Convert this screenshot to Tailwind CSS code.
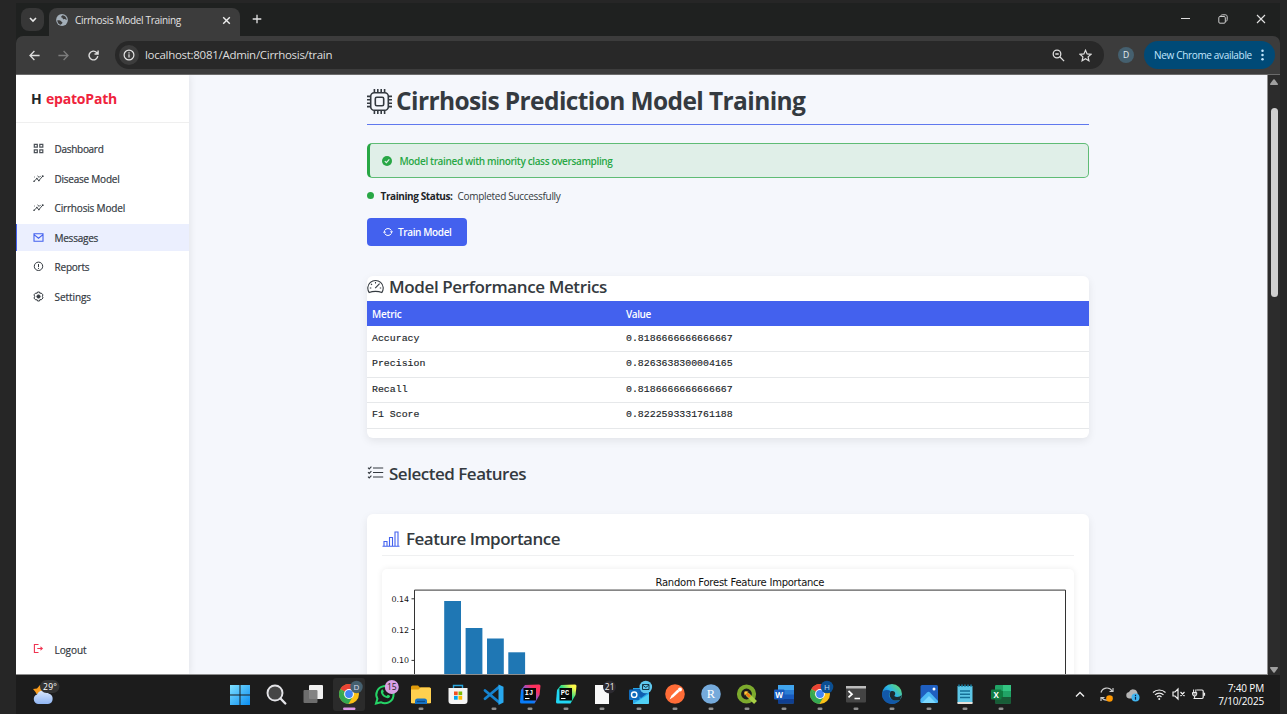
<!DOCTYPE html>
<html lang="en">
<head>
<meta charset="utf-8">
<title>Cirrhosis Model Training</title>
<script src="https://cdn.jsdelivr.net/npm/@tailwindcss/browser@4"></script>
</head>
<body class="w-[1287px] h-[714px] overflow-hidden bg-[#262626] pl-4 pr-[7px] pt-[3px] font-['Open_Sans','Noto_Sans',sans-serif] flex flex-col whitespace-nowrap">
<svg width="0" height="0" class="absolute">
  <defs>
    <linearGradient id="win" x1="0" y1="0" x2="1" y2="1"><stop offset="0" stop-color="#7fe0ff"/><stop offset="1" stop-color="#0a8df0"/></linearGradient>
    <linearGradient id="ij" x1="0" y1="1" x2="1" y2="0"><stop offset=".35" stop-color="#087cfa"/><stop offset=".55" stop-color="#a050c0"/><stop offset=".75" stop-color="#fe315d"/></linearGradient>
    <linearGradient id="pc" x1="0" y1="1" x2="1" y2="0"><stop offset=".35" stop-color="#21d7f5"/><stop offset=".55" stop-color="#21d789"/><stop offset=".85" stop-color="#fcf84a"/></linearGradient>
    <linearGradient id="edge" x1="0" y1="1" x2="1" y2="0"><stop offset=".2" stop-color="#1267b8"/><stop offset=".55" stop-color="#2cb5e8"/><stop offset="1" stop-color="#6ee04f"/></linearGradient>
    <linearGradient id="cloud" x1="0" y1="0" x2="0" y2="1"><stop offset="0" stop-color="#dce8fb"/><stop offset="1" stop-color="#8fb5f3"/></linearGradient>
    <symbol id="trend" viewBox="0 0 16 16"><path d="M1.5 12.2 5.6 8l2.8 3.2L14 4.8M1.8 6.2l1-.9M6.5 4.2 9 6.4l2.2-2.2" fill="none" stroke="currentColor" stroke-width="1.3"/><circle cx="1.6" cy="12" r="1.2"/><circle cx="5.6" cy="8" r="1.1"/><circle cx="8.6" cy="11" r="1.2"/><circle cx="14.2" cy="4.6" r="1.3"/></symbol>
    <symbol id="chrome" viewBox="0 0 20 20"><circle cx="10" cy="10" r="10" fill="#fbc116"/><path d="M10 10 1.34 5A10 10 0 0 1 18.66 5Z" fill="#ea4335"/><path d="M1.34 5A10 10 0 0 0 9.4 20L14 12.2 10 10 5.6 12.3Z" fill="#34a853"/><path d="M1.34 5 5.7 12.5 10 10Z" fill="#34a853"/><path d="M10 5.4h8.9l-.24-.4H10Z" fill="#ea4335"/><circle cx="10" cy="10" r="4.9" fill="#fff"/><circle cx="10" cy="10" r="3.9" fill="#4285f4"/></symbol>
  </defs>
</svg>

<!-- Tab strip -->
<header class="h-[33px] shrink-0 bg-[#1f2120] flex items-end text-[#e3e3e3] pl-[5px]">
  <button class="size-[23px] mb-[5px] rounded-[8px] bg-[#373737] flex items-center justify-center"><svg width="8" height="6" viewBox="0 0 8 6"><path d="m1 1 3 3 3-3" fill="none" stroke="#e8e8e8" stroke-width="1.6"/></svg></button>
  <div class="w-[191px] h-7 ml-[5px] rounded-t-[8px] bg-[#3c3c3c] flex items-center pl-[7px] pb-[4px]">
    <svg width="12" height="12" viewBox="0 0 12 12"><circle cx="6" cy="6" r="5.900" fill="#a4afb9"/><path d="M1.300 6.300c1.700-.2 3.200 0 3.800.9s1.500.6 1.300 1.700-1.400.6-1.500 1.900C2.500 10.300 1.300 8.500 1.300 6.300ZM6.500 1.200c-.8.900-1.500 1-1.300 1.900s1.300.4 1.500 1.300 1 .9 1.900.7 1 .8 2.100.8C10.600 3.500 9 1.400 6.500 1.200Z" fill="#3c3c3c"/></svg>
    <span class="ml-[7px] text-[10px] tracking-[-0.317px]">Cirrhosis Model Training</span>
    <svg class="ml-auto mr-[9px]" width="9" height="9" viewBox="0 0 9 9"><path d="m1.200 1.200 6.600 6.600m0-6.600L1.200 7.800" stroke="#eee" stroke-width="1.400"/></svg>
  </div>
  <svg class="ml-[12px] mb-[12px]" width="10" height="10" viewBox="0 0 10 10"><path d="M5 .7v8.600M.7 5h8.600" stroke="#e3e3e3" stroke-width="1.300"/></svg>
  <div class="ml-auto flex items-center mb-[12px] pr-[14px]">
    <svg width="9" height="9" viewBox="0 0 9 9"><path d="M0 3.500h9" stroke="#ddd"/></svg>
    <svg class="ml-[28px]" width="10" height="10" viewBox="0 0 10 10" fill="none" stroke="#ccc"><rect x=".8" y="2.500" width="6.500" height="6.700" rx="1.200"/><path d="M2.800 2.300C2.800 1.200 3.500.8 4.300.8h3C8.500.8 9.200 1.500 9.200 2.700v3c0 1-.5 1.500-1.700 1.600"/></svg>
    <svg class="ml-[28px]" width="10" height="10" viewBox="0 0 10 10"><path d="m1 1 8 8m0-8L1 9" stroke="#e3e3e3" stroke-width="1.100"/></svg>
  </div>
</header>

<!-- Toolbar -->
<div class="h-[38px] shrink-0 bg-[#1f2120]">
<div class="h-full bg-[#3c3c3c] rounded-t-[7px] flex items-center pl-[13px] pr-[5px]">
  <svg width="11" height="11" viewBox="0 0 11 11" fill="none" stroke="#dedede" stroke-width="1.300"><path d="M10.600 5.500H1.200M5.400 1 1 5.500 5.400 10"/></svg>
  <svg class="ml-[18px]" width="11" height="11" viewBox="0 0 11 11" fill="none" stroke="#7c7c7c" stroke-width="1.300"><path d="M.4 5.500h9.400M5.600 1 10 5.500 5.600 10"/></svg>
  <svg class="ml-[19px]" width="11" height="11" viewBox="0 0 11 11" fill="none" stroke="#dedede" stroke-width="1.400"><path d="M9.800 6.200A4.400 4.400 0 1 1 8.600 2.400L9.900 3.700M10.100.4v3.600H6.500"/></svg>
  <div class="ml-4 w-[989px] h-7 rounded-full bg-[#282828] flex items-center pl-[4px] pr-[12px] text-[#dedede]">
    <span class="size-5 rounded-full bg-[#3c3c3c] flex items-center justify-center"><svg width="12" height="12" viewBox="0 0 12 12" fill="none" stroke="#e3e3e3" stroke-width="1.200"><circle cx="6" cy="6" r="4.900"/><path d="M6 5.300v3.200M6 3.200v1.200"/></svg></span>
    <span class="ml-[6px] text-[11.500px] tracking-[-0.287px]">localhost:8081/Admin/Cirrhosis/train</span>
    <svg class="ml-auto" width="13" height="13" viewBox="0 0 13 13" fill="none" stroke="#dedede" stroke-width="1.300"><circle cx="5" cy="5" r="3.800"/><path d="m7.800 7.800 4.300 4.300M3.300 5h3.400"/></svg>
    <svg class="ml-[14px]" width="13" height="13" viewBox="0 0 13 13" fill="none" stroke="#dedede" stroke-width="1.200"><path d="m6.500 1.300 1.600 3.600 3.900.4-2.900 2.600.8 3.900-3.400-2-3.400 2 .8-3.900L1 5.300l3.900-.4Z"/></svg>
  </div>
  <span class="ml-[14px] size-4 rounded-full bg-[#45606f] text-[#e6eef2] text-[8.500px] flex items-center justify-center">D</span>
  <div class="ml-auto w-[131px] h-7 rounded-full bg-[#004a77] text-[#c2e7ff] text-[10px] flex items-center pl-[10px] pr-[11px]"><span class="tracking-[-0.33px] pt-[1px]">New Chrome available</span>
    <svg class="ml-auto" width="3" height="12" viewBox="0 0 3 12" fill="#c2e7ff"><circle cx="1.500" cy="1.700" r="1.250"/><circle cx="1.500" cy="6" r="1.250"/><circle cx="1.500" cy="10.300" r="1.250"/></svg>
  </div>
</div>
</div>

<!-- Page -->
<div class="h-[601px] shrink-0 flex border-t border-[#6b6b6b] bg-[#2c2c2c]">
  <div class="w-[1252px] h-[600px] bg-[#f5f7fc] flex border-b border-b-[#8e8e8e] border-r border-r-[#8e8e8e] overflow-hidden">
    <aside class="w-[172.500px] bg-white shadow-[0_0_8px_rgba(0,0,0,0.1)] flex flex-col text-[#33393f] z-10">
      <div class="h-12 border-b border-[#efefef] flex items-center pl-[15px] text-[14px] font-bold text-[#212529]"><span class="w-[15px]">H</span><span class="text-[#ef233c] tracking-[-0.207px]">epatoPath</span></div>
      <nav class="pt-[12.500px] flex flex-col gap-[2.600px] text-[10px] font-medium [&_svg]:-mt-[1px] [&_span]:pt-[1px] [&_span]:[-webkit-text-stroke:0.2px]">
        <a class="h-[27px] pl-[17px] flex items-center gap-[10.500px]"><svg width="11" height="11" viewBox="0 0 11 11" fill="none" stroke="#4c5258" stroke-width="1.200"><path d="M1.300 1.300h3v2.800h-3zM6.800 1.300h3v2.800h-3zM1.300 6.800h3v2.900h-3zM6.800 6.800h3v2.900h-3z"/></svg><span class="tracking-[-0.29px]">Dashboard</span></a>
        <a class="h-[27px] pl-[17px] flex items-center gap-[10.500px]"><svg width="11" height="11" fill="#33393f" color="#33393f"><use href="#trend"/></svg><span class="tracking-[-0.23px]">Disease Model</span></a>
        <a class="h-[27px] pl-[17px] flex items-center gap-[10.500px]"><svg width="11" height="11" fill="#33393f" color="#33393f"><use href="#trend"/></svg><span class="tracking-[-0.17px]">Cirrhosis Model</span></a>
        <a class="h-[27px] pl-4 flex items-center gap-[10.500px] bg-[#ebeffe] border-l border-[#4361ee]"><svg width="11" height="11" viewBox="0 0 11 11" fill="none" stroke="#4361ee" stroke-width="1.100"><path d="M1 1.800h9v7.400H1zM1 2.600l4.500 3.600L10 2.600"/></svg><span class="tracking-[-0.25px]">Messages</span></a>
        <a class="h-[27px] pl-[17px] flex items-center gap-[10.500px]"><svg width="11" height="11" viewBox="0 0 11 11" fill="none" stroke="#33393f"><circle cx="5.500" cy="5.300" r="4.200"/><path d="M5.500 3v3M5.500 6.900v1"/></svg><span class="tracking-[-0.2px]">Reports</span></a>
        <a class="h-[27px] pl-[17px] flex items-center gap-[10.500px]"><svg width="11" height="11" viewBox="0 0 11 11" fill="none" stroke="#33393f"><path d="M4.500 1h2l.4 1.300 1.300-.3 1.700 1.800L9.400 5.500l.6 1.400-1.600 1.800-1.500-.1L6.500 10h-2l-.4-1.300-1.400.2L1 7.100l.7-1.600L1 3.800 2.700 2l1.400.3Z"/><circle cx="5.500" cy="5.500" r="1.600" fill="#33393f"/></svg><span class="tracking-[-0.07px]">Settings</span></a>
      </nav>
      <a class="mt-auto mb-[10.500px] h-[27px] pl-[17px] flex items-center gap-[10.500px] text-[10px] font-medium"><svg class="mb-[3px]" width="11" height="11" viewBox="0 0 11 11" fill="none" stroke="#ef3350" stroke-width="1.100"><path d="M5.500 1.500H1.400v8h4.100M4.300 5.500h4.500"/><path d="m7.500 3.300 2.600 2.200-2.600 2.200Z" fill="#ef3350" stroke="none"/></svg><span class="pt-[1px] tracking-[-0.06px] [-webkit-text-stroke:0.2px]">Logout</span></a>
    </aside>

    <main class="ml-[178.500px] w-[722px] flex flex-col shrink-0 text-[#343a40] *:shrink-0">
      <h1 class="h-[50px] border-b border-[#5f78ee] flex items-center gap-[4px] text-[24.500px] font-bold pt-[4px]">
        <svg width="25" height="25" viewBox="0 0 25 25" fill="none" stroke="#343a40" stroke-width="1.600"><rect x="3.700" y="3.700" width="17.600" height="17.600" rx="3.600"/><rect x="8.300" y="8.300" width="8.400" height="8.400" rx="1.500"/><path d="M7.400 0v3.700m3.400-3.700v3.700m3.400-3.700v3.700m3.400-3.700v3.700M7.400 21.300V25m3.400-3.700V25m3.400-3.700V25m3.400-3.700V25M0 7.400h3.700M0 10.800h3.700M0 14.200h3.700M0 17.600h3.700M21.300 7.400H25m-3.700 3.400H25m-3.700 3.400H25m-3.700 3.400H25"/></svg>
        <span class="tracking-[-0.6px]">Cirrhosis Prediction Model Training</span>
      </h1>
      <div class="mt-[18px] h-[35px] rounded-[5px] border border-l-[3px] border-[#28a745]/70 border-l-[#28a745] bg-[#e0efe8] flex items-center pl-3 gap-[7.500px] text-[10px] font-semibold text-[#28a745]">
        <svg width="10" height="10" viewBox="0 0 10 10"><circle cx="5" cy="5" r="5" fill="#28a745"/><path d="m2.800 5.100 1.600 1.600 2.900-3.300" fill="none" stroke="#e0efe8" stroke-width="1.200"/></svg>
        <span class="pt-[2px] tracking-[-0.357px]">Model trained with minority class oversampling</span>
      </div>
      <div class="mt-[9px] h-[17px] flex items-center text-[10px]"><span class="size-[7px] rounded-full bg-[#28a745] mr-[6.500px]"></span><b class="pt-[1px] text-[#212529] tracking-[-0.405px]">Training Status:</b><span class="pt-[1px] ml-[5px] tracking-[-0.3px]">Completed Successfully</span></div>
      <button class="mt-[13.500px] w-[100px] h-[28.500px] rounded-[4px] bg-[#4361ee] text-white text-[10px] font-semibold flex items-center pl-4 gap-[5px]"><svg width="10" height="10" viewBox="0 0 10 10" fill="none" stroke="#fff" stroke-width="1"><path d="M1.600 3.600A3.800 3.800 0 0 1 8.400 3.600M8.400 6.400A3.800 3.800 0 0 1 1.600 6.400"/><path d="M8.500 6.500 7 4.300h3ZM1.500 3.500l1.500 2.200H0Z" fill="#fff" stroke="none"/></svg><span class="pt-[1px] tracking-[-0.375px]">Train Model</span></button>

      <section class="mt-[29.500px] h-[162.500px] rounded-[6px] bg-white shadow-[0_3px_8px_rgba(0,0,0,0.08)] overflow-hidden">
        <h2 class="h-[25.500px] flex items-center gap-[5px] text-[17px] font-semibold pb-[3px]">
          <svg class="-mt-px" width="17" height="15" viewBox="0 0 17 15" fill="none" stroke="#343a40" stroke-width="1.100"><path d="M2.200 13.600a7.700 7.700 0 1 1 12.600 0c-2-.9-4-1.200-6.300-1.200s-4.300.3-6.300 1.200Z"/><path d="M8.500 3v1.500M4 4.800l1 1M2.800 9h1.500M12.800 9h1.400M8.200 9.200 12.600 4.600"/></svg>
          <span class="tracking-[-0.382px]">Model Performance Metrics</span></h2>
        <table class="w-full text-left border-collapse">
          <thead><tr class="h-[25px] bg-[#4361ee] text-white text-[10px]"><th class="pl-[5px] pt-[2px] w-[254px] font-semibold tracking-[-0.26px]">Metric</th><th class="pl-[5px] pt-[2px] font-semibold tracking-[-0.4px]">Value</th></tr></thead>
          <tbody class="font-['Liberation_Mono',monospace] text-[9.900px] text-[#212529] [-webkit-text-stroke:0.15px] [&_td]:pt-[1px]">
            <tr class="h-[25.500px] border-b border-[#e6e8ea]"><td class="pl-[5px]">Accuracy</td><td class="pl-[5px]">0.8186666666666667</td></tr>
            <tr class="h-[25.500px] border-b border-[#e6e8ea]"><td class="pl-[5px]">Precision</td><td class="pl-[5px]">0.8263638300004165</td></tr>
            <tr class="h-[25.500px] border-b border-[#e6e8ea]"><td class="pl-[5px]">Recall</td><td class="pl-[5px]">0.8186666666666667</td></tr>
            <tr class="h-[25.500px] border-b border-[#e6e8ea]"><td class="pl-[5px]">F1 Score</td><td class="pl-[5px]">0.8222593331761188</td></tr>
          </tbody>
        </table>
      </section>

      <h2 class="mt-[23px] h-[25px] flex items-center gap-[5px] text-[17px] font-semibold">
        <svg class="mb-[2px]" width="17" height="13" viewBox="0 0 17 13" fill="none" stroke="#343a40" stroke-width="1.100"><path d="M6 2h10.200M6 6.500h10.200M6 11h10.200M1 1.700l1.200 1.200L4.400.6M1 6.200l1.200 1.200 2.200-2.300M1 10.700l1.200 1.200 2.200-2.300"/></svg>
        <span class="tracking-[-0.487px]">Selected Features</span></h2>

      <section class="mt-[28px] h-[200px] rounded-t-[6px] bg-white shadow-[0_3px_8px_rgba(0,0,0,0.08)] px-[15px] pt-[13px]">
        <h2 class="h-[29px] border-b border-[#eff0f1] flex items-center gap-[6px] text-[17px] font-semibold pb-[4px]">
          <svg width="18" height="16" viewBox="0 0 18 16" fill="none" stroke="#4361ee" stroke-width="1.100"><path d="M.5 15.200h17M2 15v-4.500h3V15M7.500 15V6.500h3V15M13 15V1h3v14"/></svg>
          <span class="tracking-[-0.507px]">Feature Importance</span></h2>
        <div class="mt-[13px] h-[150px] rounded-[5px] bg-white shadow-[0_0_6px_rgba(0,0,0,0.08)]">
          <svg width="692" height="150" viewBox="0 0 692 150" class="font-['DejaVu_Sans',sans-serif]">
            <text x="358" y="16.500" font-size="10" text-anchor="middle" textLength="169" fill="#111">Random Forest Feature Importance</text>
            <g fill="#1f77b4"><rect x="62.200" y="32" width="16.800" height="118"/><rect x="83.600" y="59" width="16.800" height="91"/><rect x="105" y="69.500" width="16.800" height="80"/><rect x="126.300" y="83.300" width="16.800" height="70"/></g>
            <path d="M32.500 150V21.100h651V150M29.500 29.800h3M29.500 60.500h3M29.500 91.400h3" fill="none" stroke="#333" stroke-width="1"/>
            <g font-size="7.900" fill="#111"><text x="9.500" y="32.700">0.14</text><text x="9.500" y="63.600">0.12</text><text x="9.500" y="94.300">0.10</text></g>
          </svg>
        </div>
      </section>
    </main>
  </div>
  <div class="w-3 flex flex-col items-center pt-[4px] pb-[2px]">
    <svg width="8" height="6" viewBox="0 0 8 6"><path d="M3.300.6a.9.9 0 0 1 1.400 0L8 5q.2 1-.7 1H.7Q-.2 6 0 5Z" fill="#a0a0a0"/></svg>
    <div class="mt-[23px] w-[7px] h-[189px] rounded-full bg-[#d0d0d0]"></div>
    <svg class="mt-auto" width="8" height="6" viewBox="0 0 8 6"><path d="M3.300 5.400a.9.9 0 0 0 1.400 0L8 1Q8.200 0 7.300 0H.7Q-.2 0 0 1Z" fill="#a0a0a0"/></svg>
  </div>
</div>

<!-- Taskbar -->
<footer class="h-[39px] shrink-0 bg-[#1c1c1c] flex text-white">
  <div class="w-[206px] pl-4 pt-[4px]"><svg width="28" height="27" viewBox="0 0 28 27"><path d="m1 10 4-.5L8 6l2.500 3 1 5-7 1-1-2Z" fill="#f89b1c"/><path d="M6 25a5 5 0 0 1-1-9.600 6.500 6.500 0 0 1 11.500-1 5.400 5.400 0 0 1-.5 10.600Z" fill="url(#cloud)"/><rect x="8" y="1" width="19.500" height="13" rx="6.500" fill="#333"/><text x="11" y="10.500" font-size="8.500" textLength="14" fill="#fff">29°</text></svg></div>
  <div class="w-[797px] flex [&>div]:flex-1 [&>div]:flex [&>div]:justify-center [&>div]:pt-[3px]">
    <div><svg width="32" height="34" viewBox="0 0 32 34"><path d="M6 7h9.500v9.500H6zM16.500 7H26v9.500h-9.500zM6 17.500h9.500V27H6zM16.500 17.500H26V27h-9.500z" fill="url(#win)"/></svg></div>
    <div><svg width="32" height="34" viewBox="0 0 32 34"><circle cx="15" cy="15" r="7.500" fill="#464646" stroke="#e4e4e8" stroke-width="1.900"/><path d="m20.500 20.500 4.800 5" stroke="#e4e4e8" stroke-width="2.400" stroke-linecap="round"/></svg></div>
    <div><svg width="32" height="34" viewBox="0 0 32 34"><rect x="12" y="7" width="14" height="14" rx="1" fill="#f0f0f0"/><rect x="6.500" y="12" width="14" height="13" rx="1" fill="#777" fill-opacity=".9"/></svg></div>
    <div><svg width="32" height="34" viewBox="0 0 32 34"><rect x="0" y="0" width="32" height="33" rx="3" fill="#2b2b2b"/><use href="#chrome" x="6" y="6" width="20" height="20"/><circle cx="23.500" cy="9" r="6.200" fill="#45606f"/><text x="23.500" y="12" font-size="8" fill="#dde" text-anchor="middle">D</text><rect x="10" y="29.500" width="12.500" height="2.500" rx="1.200" fill="#dc9ae6"/></svg></div>
    <div><svg width="32" height="34" viewBox="0 0 32 34"><path d="M7 25.500 8.400 20.800A8.600 8.600 0 1 1 11.800 24.200Z" fill="#1c1c1c" stroke="#25d366" stroke-width="2"/><path d="M12.500 12c1-1 1.500-.5 2.200 1.500.2.700-.8 1-.6 1.500.8 1.500 2 2.500 3.300 3 .7.200 1-1.200 1.500-1.200 2 .7 2.500 1.200 1.900 2.300-1 1.700-3.300 1.400-5.500 0-2.300-1.500-4.600-4.800-2.800-7.100Z" fill="#25d366"/><circle cx="22.800" cy="9" r="7" fill="#d9a0e5"/><text x="22.800" y="12" font-size="8.500" fill="#222" text-anchor="middle">15</text></svg></div>
    <div><svg width="32" height="34" viewBox="0 0 32 34"><path d="M6 9q0-1.500 1.500-1.500H13l2 2h9.500q1.500 0 1.500 1.500v13q0 1.500-1.500 1.500h-17Q6 25.500 6 24Z" fill="#e09b0b"/><path d="M6 11.500h7.500l2-2h9q1.500 0 1.500 1.500v14H6Z" fill="#ffd04f"/><path d="M10 26v-3q0-2.500 2.500-2.500h7Q22 20.500 22 23v3Z" fill="#1672c4"/><path d="M12 23.500h8" stroke="#0b4b86" stroke-width="1.200"/><rect x="13.500" y="29.500" width="5" height="2.500" rx="1.200" fill="#8f8f8f"/></svg></div>
    <div><svg width="32" height="34" viewBox="0 0 32 34"><path d="M11.500 11V7.500h9V11" fill="none" stroke="#29a6df" stroke-width="1.400"/><path d="M6.500 10h19v13q0 3-3 3h-13q-3 0-3-3Z" fill="#f4f4f4"/><path d="M12 13.500h3.700v3.700H12z" fill="#f25022"/><path d="M16.500 13.500h3.700v3.700h-3.700z" fill="#7fba00"/><path d="M12 18h3.700v3.700H12z" fill="#00a4ef"/><path d="M16.500 18h3.700v3.700h-3.700z" fill="#ffb900"/></svg></div>
    <div><svg width="32" height="34" viewBox="0 0 32 34"><path d="m7 12.500 14 11.800M7 20.700 21 9" stroke="#1583cf" stroke-width="2.800" stroke-linecap="round"/><path d="m20.500 6.500 5 2.300v15.800l-5 2.400Z" fill="#28a8ee"/><rect x="13.500" y="29.500" width="5" height="2.500" rx="1.200" fill="#8f8f8f"/></svg></div>
    <div><svg width="32" height="34" viewBox="0 0 32 34"><path d="m11 7 14-.5q1.500 0 1.500 1.500l-1 9-5 8.500H7.500Q6 25.500 6 24l1-12Z" fill="url(#ij)"/><rect x="9.500" y="10" width="12.500" height="12.500" fill="#080808"/><text x="10.800" y="16.500" font-size="7" font-weight="700" font-family="Liberation Mono" fill="#fff">IJ</text><path d="M11 20.500h4.500" stroke="#fff"/><rect x="13.500" y="29.500" width="5" height="2.500" rx="1.200" fill="#8f8f8f"/></svg></div>
    <div><svg width="32" height="34" viewBox="0 0 32 34"><path d="m11 7 14-.5q1.500 0 1.500 1.500l-1 9-5 8.500H7.500Q6 25.500 6 24l1-12Z" fill="url(#pc)"/><rect x="9.500" y="10" width="12.500" height="12.500" fill="#080808"/><text x="10.800" y="16.500" font-size="7" font-weight="700" font-family="Liberation Mono" fill="#fff">PC</text><path d="M11 20.500h4.500" stroke="#fff"/><rect x="13.500" y="29.500" width="5" height="2.500" rx="1.200" fill="#8f8f8f"/></svg></div>
    <div><svg width="32" height="34" viewBox="0 0 32 34"><path d="M9 7h9l5 5v14H9Z" fill="#f8f8f8"/><circle cx="23.500" cy="9" r="6.500" fill="#2c2a30"/><text x="23.700" y="12" font-size="8.500" fill="#eee" text-anchor="middle">21</text><rect x="13.500" y="29.500" width="5" height="2.500" rx="1.200" fill="#8f8f8f"/></svg></div>
    <div><svg width="32" height="34" viewBox="0 0 32 34"><path d="M10 10h16v14.500q0 1.500-1.500 1.500H10Z" fill="#28a8ea"/><path d="m10 14 8 6 8-6v-3H10Z" fill="#0f5fb0"/><path d="M10 26 26 16v8.500q0 1.500-1.500 1.500Z" fill="#50d0f5"/><rect x="6" y="11.500" width="10.500" height="10.500" rx="1" fill="#0f6cbd"/><circle cx="11.200" cy="16.700" r="2.700" fill="none" stroke="#fff" stroke-width="1.400"/><circle cx="22.800" cy="9" r="6.300" fill="#5fc8ee"/><path d="M19.500 6.500H26v5h-6.500zM19.500 7l3.300 2.500L26 7" fill="none" stroke="#15384a"/><rect x="13.500" y="29.500" width="5" height="2.500" rx="1.200" fill="#8f8f8f"/></svg></div>
    <div><svg width="32" height="34" viewBox="0 0 32 34"><circle cx="16" cy="16" r="9.800" fill="#ff6c37"/><path d="m10.500 21.500 2-4 6-6 2 2-6 5.500Z" fill="#fff"/><circle cx="21" cy="11.500" r="2" fill="#fff"/><rect x="13.500" y="29.500" width="5" height="2.500" rx="1.200" fill="#8f8f8f"/></svg></div>
    <div><svg width="32" height="34" viewBox="0 0 32 34"><circle cx="16" cy="16" r="9.800" fill="#75aadb"/><text x="16" y="20.300" font-size="12.500" font-family="Liberation Serif" fill="#fff" text-anchor="middle">R</text><rect x="13.500" y="29.500" width="5" height="2.500" rx="1.200" fill="#8f8f8f"/></svg></div>
    <div><svg width="32" height="34" viewBox="0 0 32 34"><circle cx="15.500" cy="16" r="7.500" fill="none" stroke="#7caa2d" stroke-width="4.200"/><path d="m16 16 8.500 8.500" stroke="#a8cf45" stroke-width="4"/><path d="m14 14 5 5" stroke="#ee7913" stroke-width="3"/><path d="M13.500 17.500v-4h4Z" fill="#f6cf3c"/><rect x="13.500" y="29.500" width="5" height="2.500" rx="1.200" fill="#8f8f8f"/></svg></div>
    <div><svg width="32" height="34" viewBox="0 0 32 34"><rect x="10" y="7" width="16" height="18.500" rx="1.300" fill="#2b7cd3"/><path d="M10 7h16v5H10z" fill="#41a5ee"/><path d="M10 16.500h16v4.500H10z" fill="#185abd"/><path d="M10 21h16v4.500H10z" fill="#103f91"/><rect x="6" y="11.500" width="10.500" height="10" rx="1" fill="#185abd"/><text x="11.200" y="19.500" font-size="8" font-weight="700" fill="#fff" text-anchor="middle">W</text><rect x="13.500" y="29.500" width="5" height="2.500" rx="1.200" fill="#8f8f8f"/></svg></div>
    <div><svg width="32" height="34" viewBox="0 0 32 34"><use href="#chrome" x="6" y="6" width="20" height="20"/><circle cx="23" cy="9" r="6.300" fill="#0b4f92"/><text x="23" y="12" font-size="8" fill="#bdd8f5" text-anchor="middle">H</text><rect x="13.500" y="29.500" width="5" height="2.500" rx="1.200" fill="#8f8f8f"/></svg></div>
    <div><svg width="32" height="34" viewBox="0 0 32 34"><rect x="6" y="8" width="20" height="16.500" rx="1" fill="#444"/><path d="M6 8h20v2.500H6z" fill="#bcbcbc"/><path d="m8.500 13 3.500 3.200-3.500 3.200M14.500 20.500H20" fill="none" stroke="#fff" stroke-width="1.700"/><rect x="13.500" y="29.500" width="5" height="2.500" rx="1.200" fill="#8f8f8f"/></svg></div>
    <div><svg width="32" height="34" viewBox="0 0 32 34"><circle cx="16" cy="16" r="10" fill="url(#edge)"/><path d="M6 16c0 6 5 10 10 10 4 0 6.500-2 8-4-3 1.500-7 1-9.500-1.500s-1.800-5.500.5-7.200C11 11 6.500 12 6 16Z" fill="#1258a8"/><path d="M15 13.300c2-1 4.500.2 4.200 2.600-.2 1-1.200 1.600-.6 2.300 1.500 1.300 5.500.8 7-1.200l-1.500 5c-3 1-7 1-9-1.500s-2-5.500-.1-7.200Z" fill="#1c1c1c" fill-opacity=".9"/><rect x="13.500" y="29.500" width="5" height="2.500" rx="1.200" fill="#8f8f8f"/></svg></div>
    <div><svg width="32" height="34" viewBox="0 0 32 34"><rect x="7.500" y="7" width="17.500" height="18" rx="1.500" fill="#1f5fc0"/><path d="m7.500 21 6.500-6.500q1.500-1.500 3 0L25 23v.5q0 1.500-1.500 1.500H9q-1.500 0-1.500-1.500Z" fill="#4cb9f5"/><path d="m9 25 7-7 7 7Z" fill="#7bd8ff"/><circle cx="21" cy="11" r="1.500" fill="#fff"/><rect x="13.500" y="29.500" width="5" height="2.500" rx="1.200" fill="#8f8f8f"/></svg></div>
    <div><svg width="32" height="34" viewBox="0 0 32 34"><rect x="8.500" y="8" width="15" height="17" fill="#5cc6e6"/><path d="M8.500 24h15v2h-15z" fill="#e9e0d8"/><path d="M10 6.500V9m3-2.500V9m3-2.500V9m3-2.500V9m3-2.500V9" stroke="#1b86ab" stroke-width="1.400"/><path d="M11 13h10M11 16.300h10M11 19.500h10" stroke="#146f96" stroke-width="1.400"/><rect x="13.500" y="29.500" width="5" height="2.500" rx="1.200" fill="#8f8f8f"/></svg></div>
    <div><svg width="32" height="34" viewBox="0 0 32 34"><rect x="10" y="7" width="16" height="18.500" rx="1.300" fill="#21a366"/><path d="M18 7h8v6h-8z" fill="#33c481"/><path d="M10 13h8v6h-8z" fill="#107c41"/><path d="M10 19h16v6.500H10z" fill="#185c37"/><rect x="6" y="11.500" width="10.500" height="10" rx="1" fill="#107c41"/><text x="11.200" y="19.500" font-size="8" font-weight="700" fill="#fff" text-anchor="middle">X</text><rect x="13.500" y="29.500" width="5" height="2.500" rx="1.200" fill="#8f8f8f"/></svg></div>
  </div>
  <div class="flex-1 flex items-center justify-end pr-4">
    <svg class="shrink-0 -mt-px" width="132" height="18" viewBox="0 0 132 18" fill="none" stroke="#eee" stroke-width="1.200">
      <path d="m1 11.500 4-4 4 4" stroke-width="1.400"/>
      <path d="M26 7.500A6 6 0 0 1 37 6M38 3v3.500h-3.500M37 11.500A6 6 0 0 1 27 13M26 16v-3.500h3.500" stroke="#ccc"/><circle cx="34.500" cy="13.500" r="3.300" fill="#ff9800" stroke="none"/>
      <path d="M54 13.500a3.300 3.300 0 0 1 0-6.500A4.500 4.500 0 0 1 62.500 8v5.500Z" fill="#b5b5b5" stroke="none"/><circle cx="60.500" cy="12.500" r="4" fill="#41b4ee" stroke="none"/><path d="M60.500 11.800v3M60.500 9.800v1.100" stroke="#124"/>
      <path d="M78 7.500a9 9 0 0 1 12.500 0M80 9.800a6 6 0 0 1 8.500 0M82 12a3.300 3.300 0 0 1 4.500 0"/><circle cx="84.250" cy="14" r="1" fill="#eee" stroke="none"/>
      <path d="M98 7h2l3-3v10l-3-3h-2ZM105.500 7l4 4m0-4-4 4"/>
      <path d="M121.500 5H127q1.200 0 1.200 1.200v6.100q0 1.200-1.200 1.200h-8.500M129.500 7.800v3"/><path d="M117.500 7.500h4.200v1.700q0 1.800-2.100 1.800t-2.100-1.800ZM118.600 4.500v3M120.800 4.500v3M119.600 11v2.500" fill="#888" stroke-width="1"/>
    </svg>
    <div class="-ml-px w-[58px] text-right text-[10px] leading-[13px] tracking-[-0.17px]"><div>7:40 PM</div><div>7/10/2025</div></div>
  </div>
</footer>
</body>
</html>
